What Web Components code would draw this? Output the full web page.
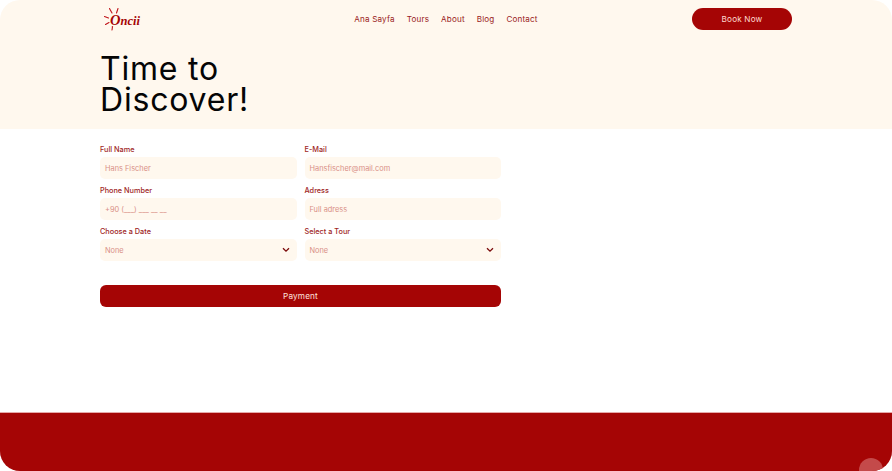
<!DOCTYPE html>
<html lang="en">
<head>
<meta charset="utf-8">
<title>Oncii</title>
<style>
html, body { margin: 0; background: #fff; }
body { font-family: Inter, "Liberation Sans", sans-serif; }
</style>
</head>
<body>
<tour-page>
    <site-hero title-top="Time to" title-bottom="Discover!"></site-hero>
    <booking-form></booking-form>
    <site-footer></site-footer>
</tour-page>

<script>
class TourPage extends HTMLElement {
    constructor() {
        super();
        this.attachShadow({ mode: 'open' });
        this.shadowRoot.innerHTML = `
            <style>
                :host {
                    display: flex;
                    flex-direction: column;
                    width: 892px;
                    height: 471px;
                    overflow: hidden;
                    border-radius: 20px;
                    background: #fff;
                }
            </style>
            <slot></slot>
        `;
    }
}
customElements.define("tour-page", TourPage);

class SiteHero extends HTMLElement {
    constructor() {
        super();
        this.attachShadow({ mode: 'open' });
        const links = ["Ana Sayfa", "Tours", "About", "Blog", "Contact"];
        this.shadowRoot.innerHTML = `
            <style>
                :host {
                    display: block;
                    height: 129px;
                    padding: 0 100px;
                    background: #fff8ee;
                }
                .hero__bar {
                    display: grid;
                    grid-template-columns: 1fr auto 1fr;
                    align-items: center;
                    height: 38px;
                }
                .hero__logo {
                    display: block;
                }
                .hero__logo text {
                    font-family: "Liberation Serif", serif;
                    font-style: italic;
                    font-weight: 700;
                    font-size: 12.5px;
                    fill: #a50505;
                }
                .hero__logo tspan {
                    font-size: 14.5px;
                }
                .hero__nav {
                    display: flex;
                    gap: 12px;
                    font-size: 8.1px;
                    letter-spacing: 0.02em;
                    color: #9a2222;
                }
                .hero__action {
                    justify-self: end;
                    display: flex;
                    align-items: center;
                    justify-content: center;
                    width: 100px;
                    height: 22px;
                    margin-top: -1px;
                    border-radius: 11px;
                    background: #a50505;
                    color: #ffd9d0;
                    font-size: 8.2px;
                    letter-spacing: 0.02em;
                }
                .hero__title {
                    margin: 15px 0 0;
                    font-size: 32px;
                    font-weight: 400;
                    line-height: 31px;
                    letter-spacing: 0.8px;
                    color: #050505;
                }
            </style>
            <div class="hero__bar">
                <svg class="hero__logo" width="44" height="26" viewBox="0 0 44 26">
                    <g stroke="#c0141a" stroke-width="1.1" stroke-linecap="round">
                        <path d="M9.5 2.5 L12 7"/>
                        <path d="M18 2.5 L16.5 7"/>
                        <path d="M4.5 10.5 L8.5 12"/>
                        <path d="M5.5 18.5 L9 16.5"/>
                        <path d="M12.5 20.5 L12 24"/>
                    </g>
                    <text x="10" y="19"><tspan>O</tspan>ncii</text>
                </svg>
                <nav class="hero__nav">${links.map(link => `<span>${link}</span>`).join("")}</nav>
                <div class="hero__action">Book Now</div>
            </div>
            <h1 class="hero__title">${this.getAttribute("title-top")}<br>${this.getAttribute("title-bottom")}</h1>
        `;
    }
}
customElements.define("site-hero", SiteHero);

class FormField extends HTMLElement {
    constructor() {
        super();
        this.attachShadow({ mode: 'open' });
        const chevron = this.hasAttribute("select") ? `
            <svg class="field__chevron" width="8" height="6" viewBox="0 0 8 6">
                <path d="M1 1.2 L4 4.2 L7 1.2" fill="none" stroke="#7a0a0a" stroke-width="1.3"/>
            </svg>` : "";
        this.shadowRoot.innerHTML = `
            <style>
                :host {
                    display: block;
                }
                .field__label {
                    height: 16px;
                    line-height: 18px;
                    font-size: 7.3px;
                    font-weight: 500;
                    color: #a01f1f;
                }
                .field__box {
                    display: flex;
                    align-items: center;
                    justify-content: space-between;
                    height: 22px;
                    padding: 0 7px 0 5px;
                    border-radius: 5px;
                    background: #fff8ee;
                    font-size: 7.4px;
                    color: #d98f86;
                }
            </style>
            <div class="field__label">${this.getAttribute("label")}</div>
            <div class="field__box"><span>${this.getAttribute("value")}</span>${chevron}</div>
        `;
    }
}
customElements.define("form-field", FormField);

class BookingForm extends HTMLElement {
    constructor() {
        super();
        this.attachShadow({ mode: 'open' });
        this.shadowRoot.innerHTML = `
            <style>
                :host {
                    display: block;
                    flex: 1;
                    width: 401px;
                    padding: 12px 0 0 100px;
                }
                .form__grid {
                    display: grid;
                    grid-template-columns: 196.5px 196.5px;
                    column-gap: 8px;
                    row-gap: 3px;
                }
                .form__submit {
                    display: flex;
                    align-items: center;
                    justify-content: center;
                    height: 22px;
                    margin-top: 24px;
                    border-radius: 6px;
                    background: #a50505;
                    color: #ffe3dc;
                    font-size: 8.2px;
                    letter-spacing: 0.02em;
                }
            </style>
            <div class="form__grid">
                <form-field label="Full Name" value="Hans Fischer"></form-field>
                <form-field label="E-Mail" value="Hansfischer@mail.com"></form-field>
                <form-field label="Phone Number" value="+90 (___) ___ __ __"></form-field>
                <form-field label="Adress" value="Full adress"></form-field>
                <form-field label="Choose a Date" value="None" select></form-field>
                <form-field label="Select a Tour" value="None" select></form-field>
            </div>
            <div class="form__submit">Payment</div>
        `;
    }
}
customElements.define("booking-form", BookingForm);

class SiteFooter extends HTMLElement {
    constructor() {
        super();
        this.attachShadow({ mode: 'open' });
        this.shadowRoot.innerHTML = `
            <style>
                :host {
                    display: block;
                    position: relative;
                    height: 58px;
                    overflow: hidden;
                    background: #a50505;
                    box-shadow: 0 -1px 0 #e6a9a9;
                }
                .footer__dot {
                    position: absolute;
                    left: 859px;
                    top: 45px;
                    width: 24px;
                    height: 24px;
                    border-radius: 50%;
                    background: #c44a4a;
                }
            </style>
            <div class="footer__dot"></div>
        `;
    }
}
customElements.define("site-footer", SiteFooter);
</script>
</body>
</html>
